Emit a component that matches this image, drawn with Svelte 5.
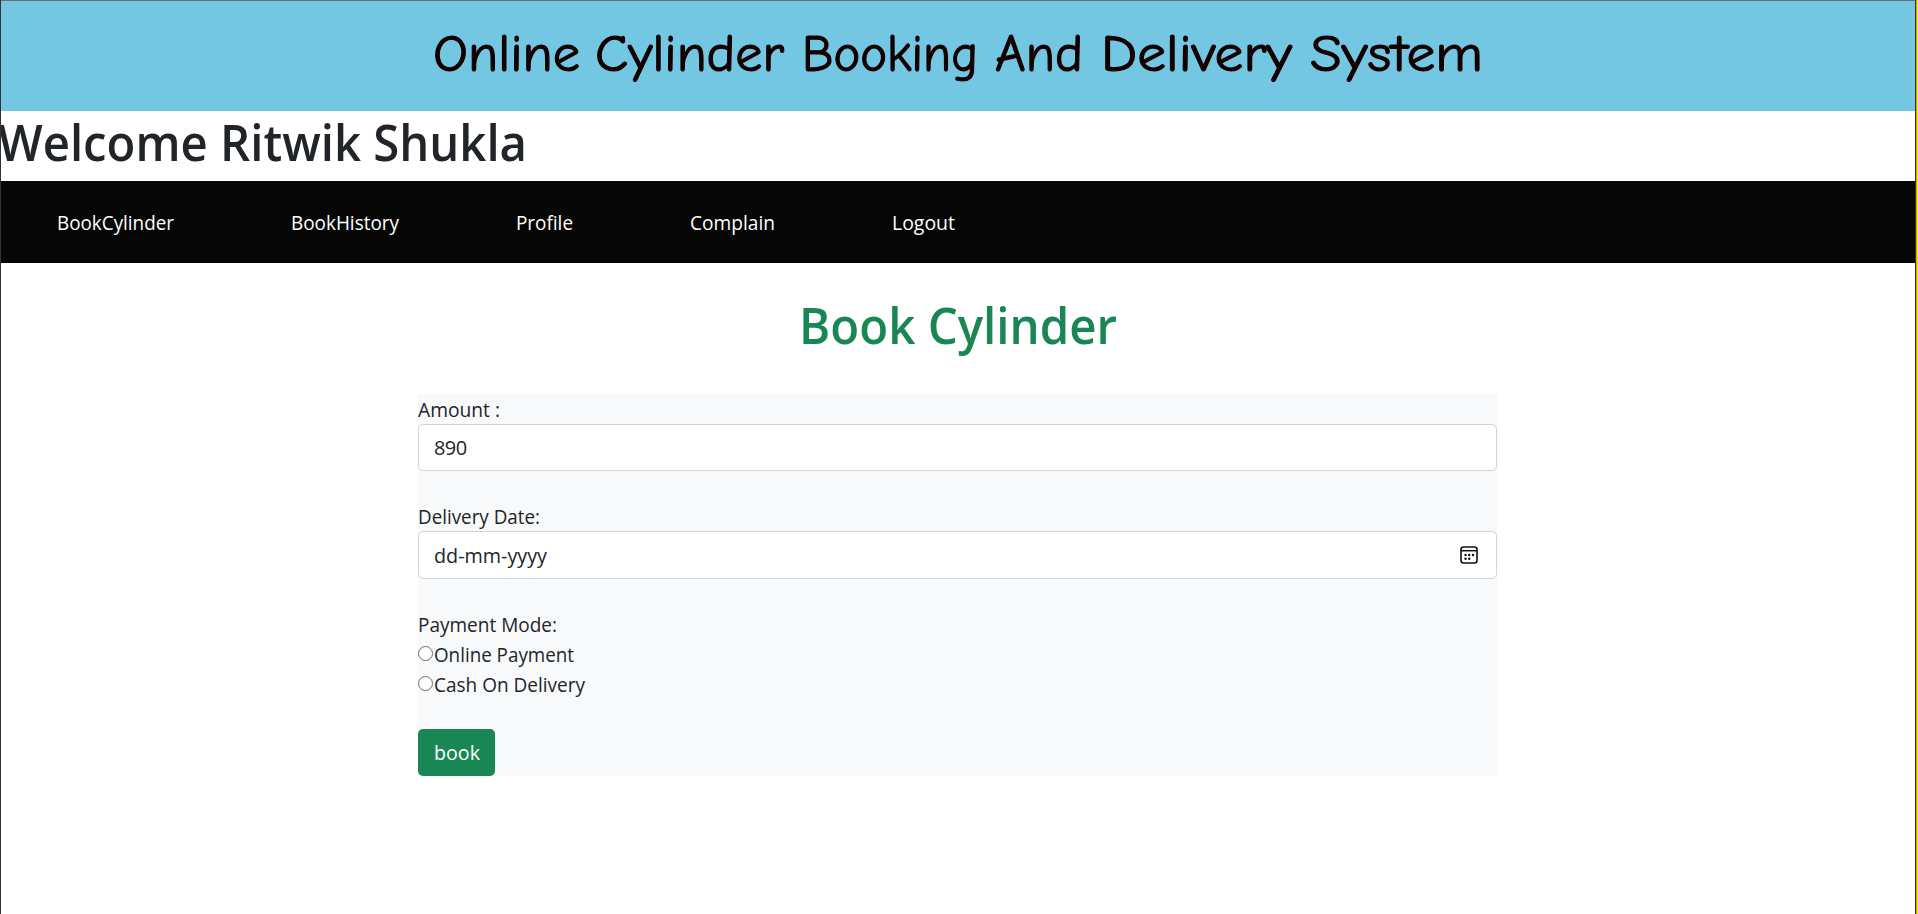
<script>
  const words = [
    { t: 'Online', x: 433, w: 147 },
    { t: 'Cylinder', x: 595, w: 189 },
    { t: 'Booking', x: 802, w: 176 },
    { t: 'And', x: 995, w: 88 },
    { t: 'Delivery', x: 1101, w: 191 },
    { t: 'System', x: 1310, w: 173 }
  ];
  const links = [
    { t: 'BookCylinder', w: 117 },
    { t: 'BookHistory', w: 108 },
    { t: 'Profile', w: 57 },
    { t: 'Complain', w: 85 },
    { t: 'Logout', w: 63 }
  ];
  const modes = [
    { t: 'Online Payment', w: 140 },
    { t: 'Cash On Delivery', w: 151 }
  ];
  // Condenses or widens a run of text so that it takes up the given width.
  function fit(node, width) {
    const natural = node.getBoundingClientRect().width;
    node.style.width = width + 'px';
    node.style.transform = `scaleX(${width / natural})`;
  }
</script>

<div class="page">
  <header>
    <svg class="title" width="1918" height="111" viewBox="0 0 1918 111">
      {#each words as word}
        <text x={word.x} y="71" textLength={word.w} lengthAdjust="spacingAndGlyphs">{word.t}</text>
      {/each}
    </svg>
  </header>
  <h1 class="welcome"><span use:fit={529}>Welcome Ritwik Shukla</span></h1>
  <nav>
    {#each links as link}
      <a href="#top"><span use:fit={link.w}>{link.t}</span></a>
    {/each}
  </nav>
  <main>
    <h1 class="heading"><span use:fit={318}>Book Cylinder</span></h1>
    <form>
      <label for="amount"><span use:fit={82}>Amount :</span></label>
      <div class="control"><input id="amount" value="890" /></div>
      <label for="date"><span use:fit={122}>Delivery Date:</span></label>
      <div class="control date">
        <span use:fit={113}>dd-mm-yyyy</span>
        <svg width="18" height="18" viewBox="0 0 18 18">
          <rect x="1" y="1" width="16" height="16" rx="2.5" fill="none" stroke="#111" stroke-width="1.6" />
          <path d="M1 4.7H17" stroke="#111" stroke-width="1.5" />
          <g fill="#111">
            <circle cx="5.5" cy="9" r="1.2" /><circle cx="9.2" cy="9" r="1.2" /><circle cx="13" cy="9" r="1.2" />
            <circle cx="5.5" cy="12.7" r="1.2" /><circle cx="9.2" cy="12.7" r="1.2" />
          </g>
        </svg>
      </div>
      <div class="line"><span use:fit={139}>Payment Mode:</span></div>
      {#each modes as mode}
        <label class="mode"><input type="radio" name="mode" /><span use:fit={mode.w}>{mode.t}</span></label>
      {/each}
      <button type="button"><span use:fit={46}>book</span></button>
    </form>
  </main>
  <div class="edge top"></div>
  <div class="edge left"></div>
  <div class="edge right"></div>
</div>

<style>
  :global(body) { overflow: hidden; background: #fff; }
  .page, .page * { box-sizing: border-box; }
  .page {
    position: relative;
    height: 914px;
    font: 400 20px/30px "Segoe UI", "Open Sans", "Noto Sans", sans-serif;
    color: #212529;
  }
  span { display: inline-block; white-space: nowrap; transform-origin: 0 50%; }
  h1 { margin: 0; font-size: 50px; line-height: 60px; font-weight: 600; }
  header { height: 111px; background: #73c7e3; }
  .title { display: block; }
  .title text {
    font: 400 52px "Comic Sans MS", "Comic Neue", Lato, sans-serif;
    fill: #140000;
    stroke: #140000;
    stroke-width: 1.1px;
    stroke-linejoin: round;
  }
  .welcome { height: 70px; padding-top: 1px; }
  .welcome span { margin-left: -2px; }
  nav {
    display: flex;
    gap: 117px;
    height: 82px;
    padding: 27px 57px 0;
    background: #060606;
    border-bottom: 2px solid #000;
  }
  a { color: #fff; text-decoration: none; }
  main { display: flex; flex-direction: column; align-items: center; padding-top: 32px; }
  .heading { height: 99px; margin-right: 2px; color: #198754; }
  form { width: 1079px; height: 382px; margin-right: 3px; background: #f8f9fa; }
  label, .line { display: block; height: 30px; }
  label span, .line span { padding-top: 1px; height: 30px; margin-left: -0.5px; }
  .control {
    display: flex;
    align-items: center;
    height: 47px;
    margin-bottom: 30px;
    padding: 0 18px 0 15px;
    background: #fff;
    border: 1px solid #ced4da;
    border-radius: 5px;
  }
  .date { height: 48px; justify-content: space-between; }
  .date span { padding-top: 1px; }
  .control input { width: 100%; padding: 0; border: 0; outline: 0; background: none; font: inherit; color: inherit; letter-spacing: -0.6px; }
  .mode { display: flex; align-items: center; }
  .mode input {
    appearance: none;
    width: 15px;
    height: 15px;
    margin: 0 1px 2px 0;
    border: 1px solid #6c6c6c;
    border-radius: 50%;
    background: #fff;
  }
  button {
    display: block;
    width: 77px;
    height: 47px;
    margin-top: 30px;
    padding: 0;
    border: 0;
    border-radius: 5px;
    background: #198754;
    color: #fff;
    font: inherit;
  }
  .edge { position: absolute; top: 0; }
  .edge.top { left: 0; right: 0; height: 1px; background: #6b6b73; }
  .edge.left { left: 0; bottom: 0; width: 1px; background: #333; }
  .edge.right { right: 0; bottom: 0; width: 3px; background: linear-gradient(90deg, #333 1px, #d0ae00 1px 2px, #ffdf20 2px); }
</style>
